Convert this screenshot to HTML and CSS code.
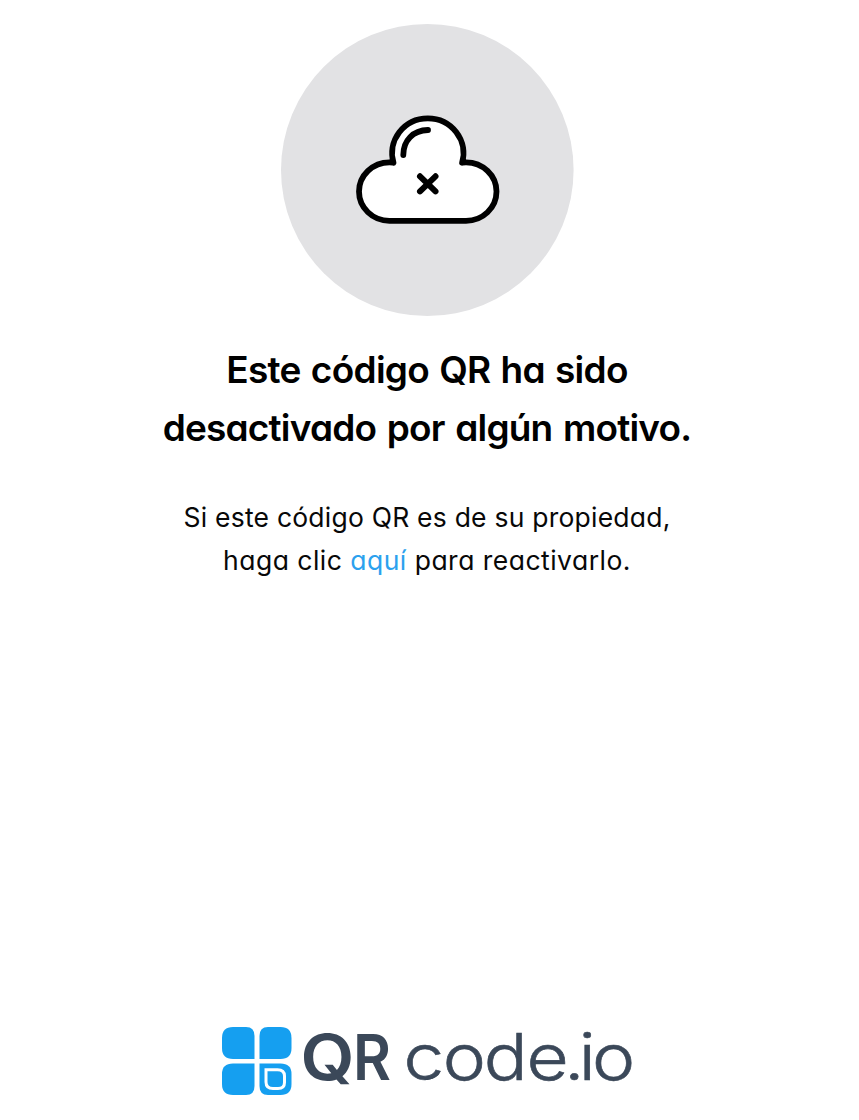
FILE: index.html
```html
<!DOCTYPE html>
<html lang="es">
<head>
<meta charset="utf-8">
<title>QR code.io</title>
<link rel="stylesheet" href="styles.css">
</head>
<body>
<main class="page">
  <svg class="illustration" viewBox="0 0 293 292" role="img" aria-label="Nube desactivada">
    <ellipse cx="146.3" cy="146" rx="146.3" ry="146" fill="#e2e2e4"/>
    <g stroke="#000" stroke-width="5.8" stroke-linecap="round" stroke-linejoin="round">
      <path fill="#fff" d="M108.500 196.800A30.500 29.250 0 0 1 108.500 138.300Q111 138.300 112.500 138.800A35.700 34.800 0 1 1 181.100 138.800Q183 138.300 185 138.300A30.500 29.250 0 0 1 185 196.800Z"/>
      <path fill="none" d="M122.300 131C122.300 116.500 132 106.300 147 106"/>
      <path fill="none" stroke-width="6" d="M139 152.300L154.500 167.300M154.500 152.300L139 167.300"/>
    </g>
  </svg>
  <h1 class="title">
    <span class="line title-first">Este código QR ha sido</span>
    <span class="line title-second">desactivado por algún motivo.</span>
  </h1>
  <p class="message">
    <span class="line message-first">Si este código QR es de su propiedad,</span>
    <span class="line message-second">haga clic <a class="link" href="#">aquí</a> para reactivarlo.</span>
  </p>
  <footer class="footer">
    <svg class="logo" viewBox="0 0 412 74" role="img" aria-label="QR code.io">
      <g fill="#159ff0">
        <path d="M12 1H25Q33.500 1 33.500 10V33H12Q1 33 1 22V12Q1 1 12 1Z"/>
        <path d="M47 1H59.500Q70.500 1 70.500 12V22Q70.500 33 59.500 33H38.500V10Q38.500 1 47 1Z"/>
        <path d="M12 37.500H33.500V60Q33.500 69 25 69H12Q1 69 1 58V48Q1 37.500 12 37.500Z"/>
        <path d="M38.500 37.500H59.500Q70.500 37.500 70.500 48V58Q70.500 69 59.500 69H47Q38.500 69 38.500 60Z"/>
      </g>
      <path d="M45 43.700H56.500Q63.500 43.700 63.500 50V56.500Q63.500 62.500 57 62.500H52Q45 62.500 45 56Z" fill="none" stroke="#fff" stroke-width="3"/>
      <text class="brand-strong" y="54"><tspan x="79.500" textLength="54" lengthAdjust="spacingAndGlyphs">Q</tspan><tspan x="132" textLength="38" lengthAdjust="spacingAndGlyphs">R</tspan></text>
      <text class="brand-light" transform="scale(1.13 1)" y="53.500" x="161.500 196.200 232.600 270.300 303.500 316.500 328.400">code.io</text>
    </svg>
  </footer>
</main>
</body>
</html>
```
FILE: styles.css
```css
* { box-sizing: border-box; }
body { margin: 0; background: #fff; color: #080808; font-family: Inter, "Open Sans", sans-serif; font-feature-settings: "cv11" 1; }
.page { width: 854px; height: 1120px; padding-top: 24px; display: flex; flex-direction: column; align-items: center; }
.illustration { width: 293px; height: 292px; flex: none; }
.title { margin: 25px 0 0; font-size: 37px; line-height: 58px; font-weight: 600; text-align: center; color: #000; }
.line { display: block; white-space: nowrap; }
.title-first { letter-spacing: -0.7px; word-spacing: 1.4px; }
.title-second { letter-spacing: -0.8px; word-spacing: 2px; }
.message { margin: 39px 0 0; font-size: 26.5px; line-height: 43px; text-align: center; }
.message-first { letter-spacing: 0.22px; }
.message-second { letter-spacing: 0.48px; }
.link { color: #2ba1ee; text-decoration: none; }
.footer { margin-top: auto; padding-bottom: 20px; }
.logo { display: block; width: 412px; height: 74px; overflow: visible; }
.brand-strong { font-size: 63px; font-weight: 600; fill: #3b4859; }
.brand-light { font-size: 64.5px; font-weight: 300; fill: #3b4859; stroke: #3b4859; stroke-width: 0.6px; }
```
